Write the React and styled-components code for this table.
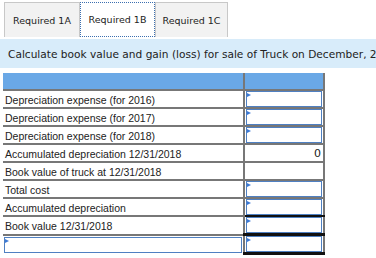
import React from "react";
import styled, { createGlobalStyle } from "styled-components";

const GlobalStyle = createGlobalStyle`
  body {
    margin: 0;
    background: #fff;
    overflow: hidden;
  }
`;

const Page = styled.div`
  width: 376px;
  height: 258px;
  overflow: hidden;
  padding-top: 2px;
  box-sizing: border-box;
`;

const Tabs = styled.div`
  display: flex;
  margin-left: 4px;
  height: 35px;
`;

const Tab = styled.div`
  display: flex;
  align-items: center;
  justify-content: center;
  width: ${p => p.width}px;
  box-sizing: border-box;
  font-family: "DejaVu Sans", Verdana, sans-serif;
  font-size: 9.5px;
  color: #222;
  background: ${p => (p.active ? "#fff" : "#f2f2f2")};
  border: ${p => (p.active ? "1px dotted #3c6fb0" : "1px solid #c8c8c8")};
  border-bottom: ${p => (p.active ? "1px dotted #3c6fb0" : "none")};
`;

const Banner = styled.div`
  margin-top: 2px;
  width: 376px;
  height: 29px;
  display: flex;
  align-items: center;
  padding-left: 8px;
  box-sizing: border-box;
  overflow: hidden;
  background: #d8ecfa;
  font-family: "DejaVu Sans", Verdana, sans-serif;
  font-size: 10.6px;
  color: #222;
  white-space: nowrap;
`;

const Table = styled.table`
  margin: 5px 0 0 3px;
  border-collapse: collapse;
  font-family: "Liberation Sans", Arial, sans-serif;
  font-size: 10.5px;
  color: #222;
`;

const HeadCell = styled.th`
  background: #6aa8e6;
  height: 16px;
  padding: 0;
  border-right: 2px solid #777;
  border-bottom: 2px solid #777;
`;

const Row = styled.tr`
  height: 18px;
`;

const Label = styled.td`
  width: 241px;
  box-sizing: border-box;
  padding: ${p => (p.input ? "0 1px" : "1px 0 0 2px")};
  border-bottom: ${p => (p.input ? "none" : "2px solid #777")};
  border-right: 2px solid #777;
  white-space: nowrap;
`;

const Value = styled.td`
  width: 80px;
  box-sizing: border-box;
  padding: ${p => (p.input ? "0 1px" : "0 2px 0 0")};
  text-align: right;
  border-right: 2px solid #777;
  border-bottom: ${p => p.bottom || "2px solid #777"};
  border-top: ${p => p.top || "none"};
  font-family: "DejaVu Sans", Verdana, sans-serif;
  font-size: 11px;
`;

const InputBox = styled.div`
  position: relative;
  height: 16px;
  border: 1.5px solid #4f80c2;
  background: #fff;
  box-sizing: border-box;
  &::before {
    content: "";
    position: absolute;
    left: 0;
    top: 1px;
    border-top: 2px solid transparent;
    border-bottom: 2px solid transparent;
    border-left: 4px solid #3c7ad6;
  }
`;

const rows = [
  { label: "Depreciation expense (for 2016)", input: true },
  { label: "Depreciation expense (for 2017)", input: true },
  { label: "Depreciation expense (for 2018)", input: true },
  { label: "Accumulated depreciation 12/31/2018", value: "0", top: "2px solid #111" },
  { label: "Book value of truck at 12/31/2018" },
  { label: "Total cost", input: true },
  { label: "Accumulated depreciation", input: true, bottom: "2px solid #111" },
  { label: "Book value 12/31/2018", input: true, bottom: "3px solid #111" },
];

export default function App() {
  return (
    <Page>
      <GlobalStyle />
      <Tabs>
        <Tab width={76}>Required 1A</Tab>
        <Tab width={75} active>Required 1B</Tab>
        <Tab width={73}>Required 1C</Tab>
      </Tabs>
      <Banner>Calculate book value and gain (loss) for sale of Truck on December, 2016</Banner>
      <Table>
        <thead>
          <tr>
            <HeadCell />
            <HeadCell />
          </tr>
        </thead>
        <tbody>
          {rows.map(r => (
            <Row key={r.label}>
              <Label>{r.label}</Label>
              <Value input={r.input} top={r.top} bottom={r.bottom}>
                {r.input ? <InputBox /> : r.value}
              </Value>
            </Row>
          ))}
          <Row>
            <Label input>
              <InputBox />
            </Label>
            <Value input bottom="3px solid #111">
              <InputBox />
            </Value>
          </Row>
        </tbody>
      </Table>
    </Page>
  );
}
